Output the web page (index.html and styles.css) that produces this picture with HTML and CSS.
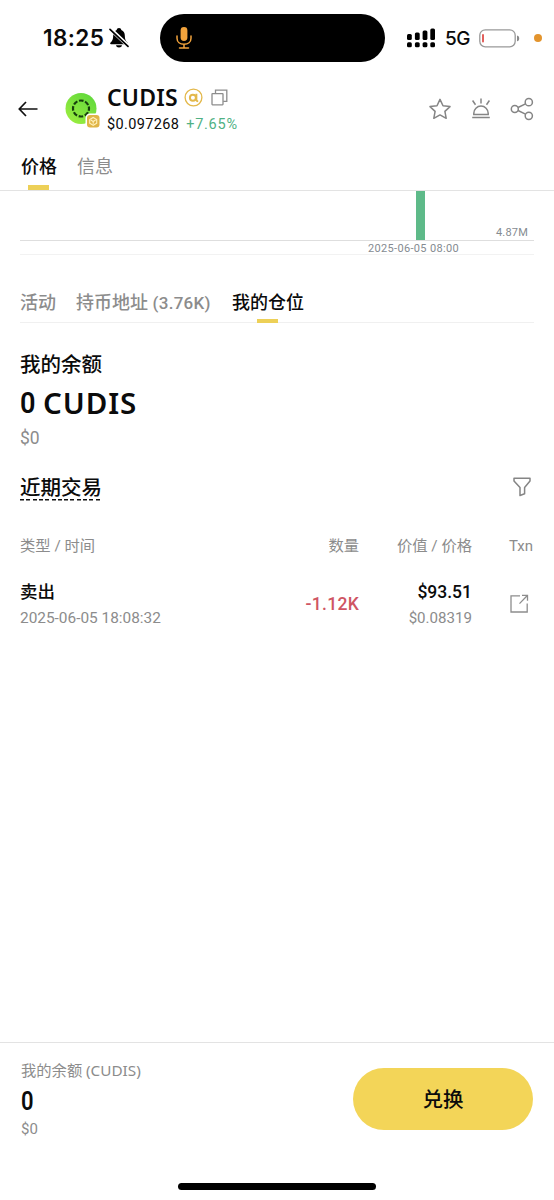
FILE: index.html
```html
<!DOCTYPE html>
<html lang="zh-CN">
<head>
<meta charset="utf-8">
<title>CUDIS</title>
<link rel="stylesheet" href="styles.css">
</head>
<body>
<div class="screen">
  <div class="status">
    <div class="status-left">
      <span class="clock">18:25</span>
      <svg class="bell" width="20" height="22" viewBox="0 0 20 22">
        <path d="M10 1c-1.300 0-2.200.9-2.300 1.900C5.200 3.800 4.200 6 4.200 8.500c0 4-1 5.500-2.800 7.300-.5.600-.2 1.400.6 1.400h16c.8 0 1.100-.8.6-1.400-1.800-1.800-2.800-3.300-2.800-7.300 0-2.500-1-4.700-3.500-5.600C12.200 1.900 11.300 1 10 1zM7 18.200h6c-.3 1.300-1.400 2.300-3 2.300s-2.700-1-3-2.300z" fill="#000"/>
        <path d="M1.500 2.200 19.500 19.200" stroke="#fff" stroke-width="3.800"/>
        <path d="M1 2.300 19 19.300" stroke="#000" stroke-width="1.700" stroke-linecap="round"/>
      </svg>
    </div>
    <div class="island">
      <svg width="16" height="24" viewBox="0 0 16 24" fill="none" stroke="#f2a33c" stroke-width="1.500" stroke-linecap="round">
        <rect x="4.600" y="1" width="6.800" height="14" rx="3.400" fill="#f2a33c" stroke="none"/>
        <path d="M1 10v2.200c0 3.700 3 6 7 6s7-2.300 7-6V10M8 18.200v3.600M3.500 21.900h9"/>
      </svg>
    </div>
    <div class="status-right">
      <svg width="28" height="20" viewBox="0 0 28 20">
        <rect x="0" y="6" width="4.800" height="6" rx="1.500"/><rect x="7.900" y="4.500" width="4.800" height="7.500" rx="1.500"/><rect x="15.600" y="2.600" width="4.800" height="9.400" rx="1.500"/><rect x="23.300" y=".5" width="4.700" height="11.500" rx="1.500"/>
        <rect x="0" y="14.200" width="4.800" height="5" rx="1.500"/><rect x="7.900" y="14.200" width="4.800" height="5" rx="1.500"/><rect x="15.600" y="14.200" width="4.800" height="5" rx="1.500"/><rect x="23.300" y="14.200" width="4.700" height="5" rx="1.500"/>
      </svg>
      <span class="network">5G</span>
      <svg class="battery" width="41" height="19" viewBox="0 0 41 19">
        <rect x=".8" y=".8" width="35.400" height="17" rx="5.500" fill="none" stroke="#999" stroke-width="1.300"/>
        <rect x="3" y="5" width="2" height="8.500" rx="1" fill="#e2605c"/>
        <path d="M38 6.500c1.700.5 2.200 1.500 2.200 2.900s-.5 2.400-2.200 2.900z" fill="#888"/>
      </svg>
      <i class="rec-dot"></i>
    </div>
  </div>

  <header class="header">
    <svg class="back" width="20" height="16" viewBox="0 0 20 16" fill="none" stroke="#111" stroke-width="1.700"><path d="M19.500 8H1.500M8 1 1.300 8 8 15"/></svg>
    <div class="token-logo">
      <svg width="36" height="36" viewBox="0 0 36 36">
        <defs><linearGradient id="lime" x1="0" y1="1" x2=".8" y2="0"><stop offset="0" stop-color="#a2f040"/><stop offset="1" stop-color="#5fd83b"/></linearGradient></defs>
        <circle cx="16" cy="16.500" r="15.500" fill="url(#lime)"/>
        <circle cx="16" cy="16.500" r="8" fill="none" stroke="#17400d" stroke-width="2.200" stroke-dasharray="4.600 1.683" stroke-dashoffset="2.300"/>
        <rect x="20.500" y="21.500" width="15" height="15" rx="4.500" fill="#fff"/>
        <rect x="22" y="23" width="12.500" height="12.500" rx="3" fill="#e0b446"/>
        <path d="m28.200 25.500 3.500 2v3.800l-3.500 2-3.500-2v-3.800zM25.800 28l2.400 1.500 2.400-1.500M28.200 29.500v2.300" fill="none" stroke="#fff1bc" stroke-width="1.100"/>
      </svg>
    </div>
    <div class="token">
      <div class="token-name">
        <span>CUDIS</span>
        <svg class="alpha" width="19" height="19" viewBox="0 0 19 19" fill="none" stroke="#e3b84b">
          <circle cx="9.500" cy="9.500" r="8.400" stroke-width="1.300"/>
          <circle cx="8.900" cy="9.700" r="3" stroke-width="2"/>
          <path d="M12.400 5.800v5.900c0 1.100.6 1.500 1.800 1.500" stroke-width="1.900"/>
        </svg>
        <svg class="copy" width="17" height="17" viewBox="0 0 17 17" fill="none" stroke="#8d8d8d" stroke-width="1.300"><rect x="1" y="4.600" width="11" height="11.200" rx=".5"/><path d="M4.500 4.500V1.200h11.300v11.100h-3.600"/></svg>
      </div>
      <div class="token-price"><span>$0.097268</span><span class="up">+7.65%</span></div>
    </div>
    <div class="actions">
      <svg width="24" height="24" viewBox="0 0 24 24" fill="none" stroke="#858585" stroke-width="1.500" stroke-linejoin="round"><path d="m12 2.400 3 6.300 7 .9-5.100 4.800 1.300 6.900-6.200-3.400-6.200 3.400 1.300-6.900L2 9.600l7-.9z"/></svg>
      <svg width="24" height="24" viewBox="0 0 24 24" fill="none" stroke="#858585" stroke-width="1.500"><path d="M4.800 17.500v-1.200a7.200 7.200 0 0 1 14.400 0v1.200zM3.200 20.500h17.600M12 1.500v5M3.600 3.500l2.900 4.200M20.400 3.500l-2.900 4.200"/></svg>
      <svg width="24" height="24" viewBox="0 0 24 24" fill="none" stroke="#858585" stroke-width="1.500"><circle cx="4.800" cy="12" r="3.500"/><circle cx="18.800" cy="5.200" r="3.600"/><circle cx="18.800" cy="18.800" r="3.600"/><path d="m8 10.500 7.500-3.700M8 13.500l7.500 3.700"/></svg>
    </div>
  </header>

  <nav class="main-tabs">
    <span class="tab active">价格</span>
    <span class="tab">信息</span>
  </nav>

  <section class="chart">
    <div class="volume"><div class="bar"></div><span class="volume-label">4.87M</span></div>
    <div class="axis">2025-06-05 08:00</div>
  </section>

  <nav class="sub-tabs">
    <span class="tab">活动</span>
    <span class="tab holders">持币地址 <b>(3.76K)</b></span>
    <span class="tab active">我的仓位</span>
  </nav>

  <section class="balance">
    <h2>我的余额</h2>
    <div class="amount"><span class="zero">0</span>CUDIS</div>
    <div class="fiat">$0</div>
  </section>

  <section class="recent">
    <div class="recent-head">
      <h2 class="dashed">近期交易</h2>
      <svg width="18" height="20" viewBox="0 0 18 20" fill="none" stroke="#858585" stroke-width="1.500" stroke-linejoin="round"><path d="M1 1.300h16v2.600l-5.400 6.500v6.400L7 18.500v-8L1 3.900z"/></svg>
    </div>
    <div class="grid th">
      <span>类型 / 时间</span><span>数量</span><span>价值 / 价格</span><span>Txn</span>
    </div>
    <div class="grid row">
      <div><div class="kind">卖出</div><div class="sub">2025-06-05 18:08:32</div></div>
      <div class="qty">-1.12K</div>
      <div><div class="value">$93.51</div><div class="sub price">$0.08319</div></div>
      <div class="link"><svg width="19" height="19" viewBox="0 0 19 19" fill="none" stroke="#8d8d8d" stroke-width="1.300"><path d="M10 1.800H1v16.200h16.200V9.500M9.500 9.600l7.600-7.900M12 1.300h5.500v5.500"/></svg></div>
    </div>
  </section>

  <footer class="footer">
    <div class="wallet">
      <div class="wallet-label">我的余额 <span>(CUDIS)</span></div>
      <div class="wallet-amount">0</div>
      <div class="wallet-fiat">$0</div>
    </div>
    <button class="swap">兑换</button>
  </footer>
  <div class="home"></div>
</div>
</body>
</html>
```
FILE: styles.css
```css
* { box-sizing: border-box; }
body { margin: 0; background: #fff; color: #0b0b0b; font-family: Roboto, "Noto Sans CJK SC", sans-serif; }
svg { display: block; flex: none; }
h2 { margin: 0; font-size: 20.5px; font-weight: 500; line-height: 30px; }
.screen { width: 554px; height: 1200px; display: flex; flex-direction: column; overflow: hidden; }

.status { height: 76px; padding-top: 14px; display: grid; grid-template-columns: 160px 225px 169px; align-items: start; }
.status-left { height: 48px; padding-left: 43px; display: flex; align-items: center; gap: 5px; }
.clock { width: 61px; font: 600 22.5px/48px Inter, sans-serif; letter-spacing: .4px; white-space: nowrap; }
.island { height: 48px; border-radius: 24px; background: #000; display: flex; align-items: center; padding-left: 16px; }
.status-right { height: 48px; padding-left: 22px; display: flex; align-items: center; }
.network { width: 25px; margin-left: 10px; font: 500 19px/49px Inter, sans-serif; letter-spacing: -.6px; white-space: nowrap; }
.battery { margin-left: 9px; }
.rec-dot { width: 8px; height: 8px; margin-left: 14px; border-radius: 50%; background: #e3942d; }

.header { height: 65px; padding: 0 20px 0 18px; display: flex; align-items: center; }
.token-logo { margin-left: 27px; padding-top: 3px; }
.token { margin-left: 6px; padding-top: 1px; }
.token-name { height: 28px; display: flex; align-items: center; font: 600 23px/28px "Noto Sans", sans-serif; letter-spacing: .2px; }
.token-name span { width: 71px; }
.alpha { margin-left: 6px; }
.copy { margin-left: 8px; }
.token-price { height: 24px; display: flex; gap: 7px; font-size: 14.5px; line-height: 27px; letter-spacing: .35px; }
.up { color: #50b184; letter-spacing: .75px; }
.actions { margin-left: auto; display: flex; gap: 17px; }

.main-tabs { height: 50px; padding-left: 21px; display: flex; gap: 20px; border-bottom: 1px solid #e3e3e3; font-size: 18px; line-height: 51px; }
.tab { color: #8c8c8c; white-space: nowrap; }
.tab.active { position: relative; color: #0b0b0b; font-weight: 500; }
.tab.active::after { content: ""; position: absolute; bottom: -1px; left: calc(50% - 11px); width: 21px; height: 4px; background: #edd057; }
.main-tabs .tab.active::after { bottom: 0; left: calc(50% - 11px); height: 5px; }

.chart { height: 64px; padding-left: 20px; padding-right: 20px; color: #858b91; font-size: 11px; }
.volume { height: 50px; display: flex; border-bottom: 1px solid #dedede; }
.bar { width: 9px; height: 49px; margin-left: 396px; background: #5eba89; }
.volume-label { margin: 34px 6px 0 auto; line-height: 16px; letter-spacing: .2px; }
.axis { height: 14px; padding-left: 348px; line-height: 15px; letter-spacing: .33px; border-bottom: 1px solid #f2f2f2; white-space: nowrap; }

.sub-tabs { height: 68px; margin: 0 20px; padding-top: 26px; display: flex; gap: 20px; border-bottom: 1px solid #f0f0f0; font-size: 18px; line-height: 43px; }
.sub-tabs .holders { width: 136px; }
.sub-tabs .tab { font-weight: 500; }
.holders b { font-weight: 500; font-size: 17px; letter-spacing: .3px; }

.balance { height: 132px; padding: 27px 20px 0; }
.amount { height: 48px; display: flex; font: 600 29.5px/46px "Noto Sans", sans-serif; letter-spacing: .9px; }
.zero { width: 23px; font-family: Roboto, sans-serif; line-height: 47px; transform: scaleX(.92); transform-origin: left; }
.fiat { color: #8c8c8c; font-size: 17.5px; line-height: 20px; }

.recent { padding: 17px 20px 0; flex: 1; }
.recent-head { height: 30px; display: flex; justify-content: space-between; padding-right: 3px; align-items: center; }
.dashed { height: 27px; line-height: 29px; background: repeating-linear-gradient(90deg, #111 0 4px, transparent 4px 6.300px) bottom / 100% 1.500px no-repeat; }
.grid { display: grid; grid-template-columns: 200px 139px 113px 61px; text-align: right; }
.grid > :first-child { text-align: left; }
.th { margin-top: 32px; color: #8c8c8c; font-size: 15.300px; line-height: 25px; }
.th span:last-child { font-size: 15px; }
.row { margin-top: 19px; align-items: center; }
.kind { font-size: 17.500px; font-weight: 500; line-height: 28px; }
.value { font-size: 17.500px; font-weight: 500; line-height: 28px; }
.sub { color: #8c8c8c; font-size: 15.400px; line-height: 24px; }
.price { font-size: 15.100px; }
.qty { color: #cf5563; font-size: 17.500px; font-weight: 500; letter-spacing: .3px; }
.link { display: flex; justify-content: flex-end; padding: 0 4px 2px 0; }

.footer { height: 141px; padding: 15px 21px 0; display: flex; justify-content: space-between; border-top: 1px solid #e3e3e3; }
.wallet-label { color: #8c8c8c; font-size: 15.300px; line-height: 24px; }
.wallet-label span { font-family: "Noto Sans", sans-serif; font-size: 15.300px; }
.wallet-amount { font-size: 25px; font-weight: 600; line-height: 37px; transform: scaleX(.88); transform-origin: left; }
.wallet-fiat { color: #8c8c8c; font-size: 15px; line-height: 18px; }
.swap { width: 180px; height: 62px; margin-top: 10px; padding: 3px 0 0; border: 0; border-radius: 31px; background: #f3d558; color: #0b0b0b; font: 500 20.500px/59px Roboto, "Noto Sans CJK SC", sans-serif; }
.home { width: 198px; height: 7px; margin: 0 auto 10px 178px; border-radius: 4px; background: #000; flex: none; }
```
